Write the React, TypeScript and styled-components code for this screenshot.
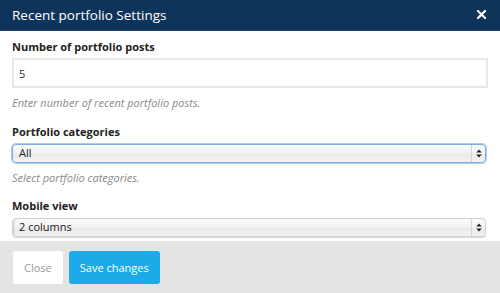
import React from "react";
import styled, { createGlobalStyle } from "styled-components";

const GlobalStyle = createGlobalStyle`
  html, body {
    margin: 0;
    padding: 0;
    background: #ffffff;
  }
  body {
    font-family: "Open Sans", "Liberation Sans", sans-serif;
  }
  * {
    box-sizing: border-box;
  }
`;

const Modal = styled.div`
  width: 500px;
  height: 293px;
  display: flex;
  flex-direction: column;
  overflow: hidden;
  background: #ffffff;
`;

const Header = styled.div`
  height: 31px;
  flex: none;
  display: flex;
  align-items: center;
  justify-content: space-between;
  padding: 0 14px 1px 12px;
  background: #0f345a;
  border-bottom: 1px solid #23466a;
`;

const Title = styled.h4`
  margin: 0;
  color: #ffffff;
  font-size: 13.5px;
  font-weight: 400;
  line-height: 20px;
`;

const CloseX = styled.button`
  border: 0;
  background: transparent;
  padding: 0;
  width: 10px;
  height: 10px;
  display: flex;
  align-items: center;
  justify-content: center;
  cursor: pointer;
`;

const Body = styled.div`
  flex: 1;
  padding: 7px 12px 0 12px;
  display: flex;
  flex-direction: column;
`;

const Group = styled.div<{ $gap?: number }>`
  display: flex;
  flex-direction: column;
  margin-bottom: ${(p) => p.$gap ?? 0}px;
`;

const Label = styled.label<{ $mb?: number }>`
  color: #222222;
  font-size: 11px;
  font-weight: 700;
  line-height: 18px;
  margin-bottom: ${(p) => p.$mb ?? 3}px;
`;

const TextInput = styled.input`
  height: 30px;
  width: 100%;
  border: 2px solid #e8e8e8;
  border-radius: 0;
  padding: 0 5px;
  font-family: inherit;
  font-size: 11px;
  color: #333333;
  outline: none;
`;

const Help = styled.p`
  margin: 6px 0 0 0;
  color: #8a8a8a;
  font-size: 11px;
  font-style: italic;
  line-height: 18px;
`;

const SelectBox = styled.div<{ $focused?: boolean }>`
  height: 19px;
  margin-right: 2px;
  border-radius: 4px;
  border: 1px solid ${(p) => (p.$focused ? "#7eaee2" : "#d2d2d2")};
  box-shadow: ${(p) =>
    p.$focused ? "0 0 0 1px #a9ccf0" : "inset 2px 0 2px -1px #c8c8c8, 0 1px 1px #d8d8d8"};
  background: linear-gradient(#fbfbfb, #f1f1f1 50%, #e8e8e8 51%, #f4f4f4);
  display: flex;
  align-items: stretch;
  overflow: hidden;
  cursor: default;
`;

const SelectValue = styled.span`
  flex: 1;
  padding-left: 6px;
  font-size: 11px;
  line-height: 16px;
  color: #222222;
`;

const Arrows = styled.span`
  width: 14px;
  flex: none;
  border-left: 1px solid #d6d6d6;
  display: flex;
  align-items: center;
  justify-content: center;
`;

const Footer = styled.div`
  height: 52px;
  flex: none;
  background: #e4e4e4;
  display: flex;
  align-items: center;
  gap: 6px;
  padding: 0 13px;
`;

const Button = styled.button<{ $primary?: boolean }>`
  height: 33px;
  padding: 0 11px;
  border: 0;
  border-radius: 3px;
  font-family: inherit;
  font-size: 11px;
  background: ${(p) => (p.$primary ? "#1cabe8" : "#ffffff")};
  color: ${(p) => (p.$primary ? "#ffffff" : "#9a9a9a")};
  cursor: pointer;
`;

const ArrowIcon = () => (
  <svg width="6" height="9" viewBox="0 0 6 9">
    <path d="M3 0.5 L5.8 3.6 L0.2 3.6 Z" fill="#222" />
    <path d="M3 8.5 L5.8 5.4 L0.2 5.4 Z" fill="#222" />
  </svg>
);

type SelectProps = { value: string; focused?: boolean };

const Select = ({ value, focused }: SelectProps) => (
  <SelectBox role="combobox" $focused={focused}>
    <SelectValue>{value}</SelectValue>
    <Arrows>
      <ArrowIcon />
    </Arrows>
  </SelectBox>
);

export default function App() {
  return (
    <>
      <GlobalStyle />
      <Modal>
        <Header>
          <Title>Recent portfolio Settings</Title>
          <CloseX aria-label="Close">
            <svg width="9" height="9" viewBox="0 0 10 10">
              <path d="M1 1 L9 9 M9 1 L1 9" stroke="#fff" strokeWidth="2.4" strokeLinecap="square" />
            </svg>
          </CloseX>
        </Header>
        <Body>
          <Group $gap={11}>
            <Label $mb={2}>Number of portfolio posts</Label>
            <TextInput defaultValue="5" />
            <Help>Enter number of recent portfolio posts.</Help>
          </Group>
          <Group $gap={10}>
            <Label>Portfolio categories</Label>
            <Select value="All" focused />
            <Help>Select portfolio categories.</Help>
          </Group>
          <Group>
            <Label>Mobile view</Label>
            <Select value="2 columns" />
          </Group>
        </Body>
        <Footer>
          <Button>Close</Button>
          <Button $primary>Save changes</Button>
        </Footer>
      </Modal>
    </>
  );
}
